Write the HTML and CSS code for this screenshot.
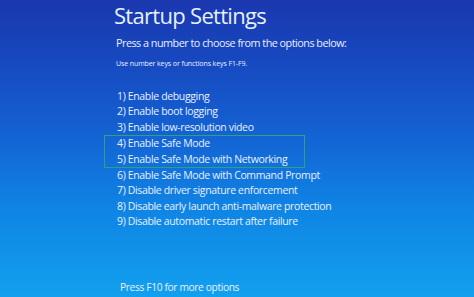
FILE: index.html
```html
<!DOCTYPE html>
<html>
<head>
<meta charset="utf-8">
<link rel="stylesheet" href="styles.css">
</head>
<body>
<main class="screen">
  <h1 class="title">Startup Settings</h1>
  <p class="lead">Press a number to choose from the options below:</p>
  <p class="hint">Use number keys or functions keys F1-F9.</p>
  <div class="options">
    <div class="opt">1) Enable debugging</div>
    <div class="opt">2) Enable boot logging</div>
    <div class="opt">3) Enable low-resolution video</div>
    <div class="highlight">
      <div class="opt">4) Enable Safe Mode</div>
      <div class="opt">5) Enable Safe Mode with Networking</div>
    </div>
    <div class="opt">6) Enable Safe Mode with Command Prompt</div>
    <div class="opt">7) Disable driver signature enforcement</div>
    <div class="opt">8) Disable early launch anti-malware protection</div>
    <div class="opt">9) Disable automatic restart after failure</div>
  </div>
  <p class="more">Press F10 for more options</p>
</main>
</body>
</html>
```
FILE: styles.css
```css
html, body {
  margin: 0;
  padding: 0;
  width: 474px;
  height: 297px;
  overflow: hidden;
}
body {
  background: linear-gradient(180deg, #1a37ae 0%, #1748bf 20%, #1462d3 45%, #0f84e4 70%, #12a0ee 100%);
  font-family: "Open Sans", "Noto Sans", sans-serif;
  color: #e8f0ff;
}
.screen {
  padding-left: 114px;
  display: flex;
  flex-direction: column;
  height: 297px;
  box-sizing: border-box;
}
.title {
  margin: 0;
  font-weight: 400;
  font-size: 22px;
  line-height: 30px;
  letter-spacing: -0.7px;
}
.lead {
  margin: 5px 0 0 2px;
  font-size: 10.8px;
  line-height: 16px;
  letter-spacing: -0.5px;
}
.hint {
  margin: 8px 0 0 2px;
  font-size: 7px;
  line-height: 10px;
  letter-spacing: -0.1px;
}
.options {
  margin: 20px 0 0 3px;
  display: flex;
  flex-direction: column;
  font-size: 10.5px;
  letter-spacing: -0.35px;
}
.opt {
  line-height: 15.4px;
  white-space: nowrap;
}
.highlight {
  margin-left: -13px;
  padding-left: 12px;
  width: 187px;
  border: 1px solid #2aa47e;
  display: flex;
  flex-direction: column;
}
.more {
  margin: auto 0 2px 6px;
  font-size: 10.2px;
  line-height: 15px;
  letter-spacing: -0.35px;
}
```
